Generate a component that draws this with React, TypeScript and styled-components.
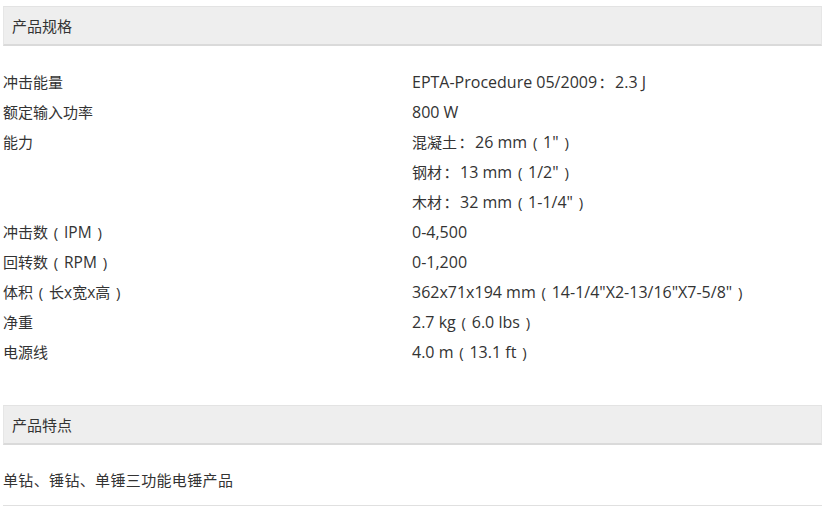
import React from "react";
import styled, { createGlobalStyle } from "styled-components";

const specs: { label: string; values: string[] }[] = [
  { label: "冲击能量", values: ["EPTA-Procedure 05/2009：2.3 J"] },
  { label: "额定输入功率", values: ["800 W"] },
  {
    label: "能力",
    values: ["混凝土：26 mm（1\"）", "钢材：13 mm（1/2\"）", "木材：32 mm（1-1/4\"）"],
  },
  { label: "冲击数（IPM）", values: ["0-4,500"] },
  { label: "回转数（RPM）", values: ["0-1,200"] },
  { label: "体积（长x宽x高）", values: ["362x71x194 mm（14-1/4\"X2-13/16\"X7-5/8\"）"] },
  { label: "净重", values: ["2.7 kg（6.0 lbs）"] },
  { label: "电源线", values: ["4.0 m（13.1 ft）"] },
];

// 中文、全角标点分开排版，让西文字号和中文字号各自对上
const renderMixed = (text: string) =>
  text
    .split(/([\u4e00-\u9fff]+|[（）：])/)
    .filter(Boolean)
    .map((part, i) => {
      if (part === "：") return <Punct key={i} $w={18}>：</Punct>;
      if (part === "（") return <Punct key={i} $w={16}>(</Punct>;
      if (part === "）") return <Punct key={i} $w={16}>)</Punct>;
      if (/[\u4e00-\u9fff]/.test(part)) return <Han key={i}>{part}</Han>;
      return <React.Fragment key={i}>{part}</React.Fragment>;
    });

const App: React.FC = () => {
  return (
    <>
      <GlobalStyle />
      <Page>
        <SectionHeader>产品规格</SectionHeader>
        <SpecTable>
          {specs.map((spec) => (
            <SpecRow key={spec.label}>
              <SpecLabel>{renderMixed(spec.label)}</SpecLabel>
              <SpecValues>
                {spec.values.map((v) => (
                  <SpecValue key={v}>{renderMixed(v)}</SpecValue>
                ))}
              </SpecValues>
            </SpecRow>
          ))}
        </SpecTable>

        <SectionHeader $top={38}>产品特点</SectionHeader>
        <Feature>单钻、锤钻、单锤三功能电锤产品</Feature>
      </Page>
    </>
  );
};

export default App;

const GlobalStyle = createGlobalStyle`
  body {
    margin: 0;
    background: #ffffff;
    font-family: "Open Sans", "Noto Sans CJK SC", sans-serif;
    color: #333333;
  }
`;

const Page = styled.div`
  width: 819px;
  margin-left: 3px;
  padding-top: 6px;
`;

const SectionHeader = styled.div<{ $top?: number }>`
  margin-top: ${(p) => p.$top ?? 0}px;
  height: 37px;
  display: flex;
  align-items: center;
  padding-left: 8px;
  background: #eeeeee;
  border-top: 1px solid #e3e3e3;
  border-left: 1px solid #e6e6e6;
  border-right: 1px solid #e6e6e6;
  border-bottom: 2px solid #dadada;
  font-family: "Noto Sans CJK SC", sans-serif;
  font-size: 15px;
  color: #333333;
`;

const SpecTable = styled.div`
  margin-top: 21px;
  display: flex;
  flex-direction: column;
`;

const SpecRow = styled.div`
  display: grid;
  grid-template-columns: 409px 1fr;
  line-height: 30px;
`;

const SpecLabel = styled.div`
  font-size: 15.5px;
`;

const SpecValues = styled.div`
  display: flex;
  flex-direction: column;
`;

const SpecValue = styled.div`
  font-size: 16px;
  white-space: nowrap;
`;

const Han = styled.span`
  font-family: "Noto Sans CJK SC", sans-serif;
  font-size: 15px;
`;

const Punct = styled.span<{ $w: number }>`
  display: inline-block;
  width: ${(p) => p.$w}px;
  text-align: center;
  font-size: 15px;
`;

const Feature = styled.div`
  margin-top: 20px;
  font-family: "Noto Sans CJK SC", sans-serif;
  font-size: 15px;
  letter-spacing: 0.35px;
  line-height: 30px;
  padding-bottom: 10px;
  border-bottom: 1px solid #e0e0e0;
`;
